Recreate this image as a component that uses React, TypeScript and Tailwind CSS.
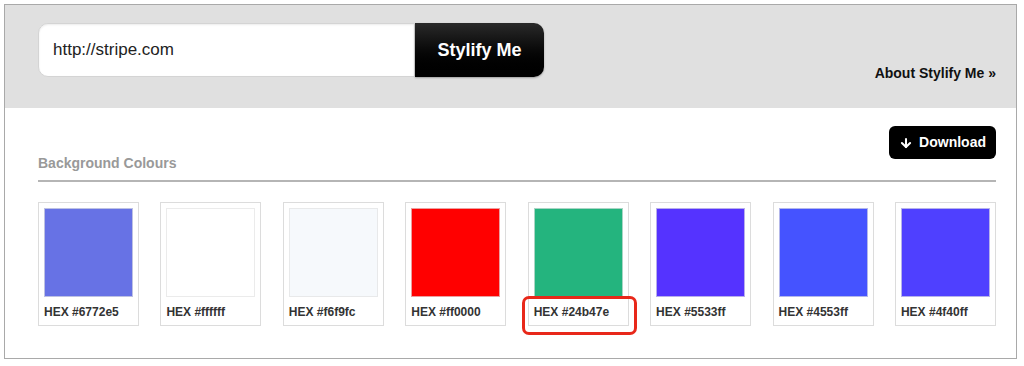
import { ArrowDown } from "lucide-react";

const swatches = [
  { hex: "#6772e5" },
  { hex: "#ffffff" },
  { hex: "#f6f9fc" },
  { hex: "#ff0000" },
  { hex: "#24b47e", highlight: true },
  { hex: "#5533ff" },
  { hex: "#4553ff" },
  { hex: "#4f40ff" },
];

export default function App() {
  return (
    <div className="bg-white w-[1024px] h-[366px] pt-[4px] pl-[4px]" style={{ fontFamily: '"Liberation Sans", Arial, sans-serif' }}>
      <div className="w-[1013px] h-[355px] border border-[#a9a9a9] flex flex-col">
        {/* Header */}
        <div className="bg-[#e0e0e0] h-[103px] px-[33px] pt-[18px] flex justify-between items-start">
          <div className="flex h-[54px]">
            <div className="w-[377px] h-full bg-white rounded-l-[10px] border border-[#d4d4d4] shadow-[inset_0_1px_2px_rgba(0,0,0,0.08)] flex items-center pl-[14px] text-[17px] text-[#222]">
              http://stripe.com
            </div>
            <button className="w-[129px] h-full rounded-r-[10px] bg-gradient-to-b from-[#2a2a2a] to-[#000] text-white font-bold text-[18px] shadow-[0_1px_2px_rgba(0,0,0,0.3)]">
              Stylify Me
            </button>
          </div>
          <div className="mt-[42px] font-bold text-[14px] leading-[16px] text-[#111] mr-[-13px]">
            About Stylify Me »
          </div>
        </div>

        {/* Body */}
        <div className="px-[33px] pt-[18px] pr-[20px]">
          <div className="flex justify-between items-start">
            <h2 className="mt-[29px] font-bold text-[14px] leading-[16px] text-[#999]">Background Colours</h2>
            <button className="h-[33px] px-[10px] rounded-[6px] bg-black text-white font-bold text-[14px] flex items-center gap-[6px]">
              <ArrowDown size={14} strokeWidth={3.5} />
              Download
            </button>
          </div>
          <div className="mt-[9px] h-[2px] bg-[#b5b5b5]" />
          <div className="mt-[20px] flex justify-between">
            {swatches.map((s) => (
              <div key={s.hex} className="relative w-[101px] h-[124px] border border-[#dcdcdc] p-[5px] bg-white">
                <div className="w-[89px] h-[89px] border border-[#e3e3e3]/70" style={{ backgroundColor: s.hex }} />
                <div className="pt-[8px] font-bold text-[12px] leading-[14px] text-[#333]">HEX {s.hex}</div>
                {s.highlight && (
                  <div className="absolute left-[-7px] top-[93px] w-[115px] h-[39px] border-[3px] border-[#e8281a] rounded-[7px]" />
                )}
              </div>
            ))}
          </div>
        </div>
      </div>
    </div>
  );
}
